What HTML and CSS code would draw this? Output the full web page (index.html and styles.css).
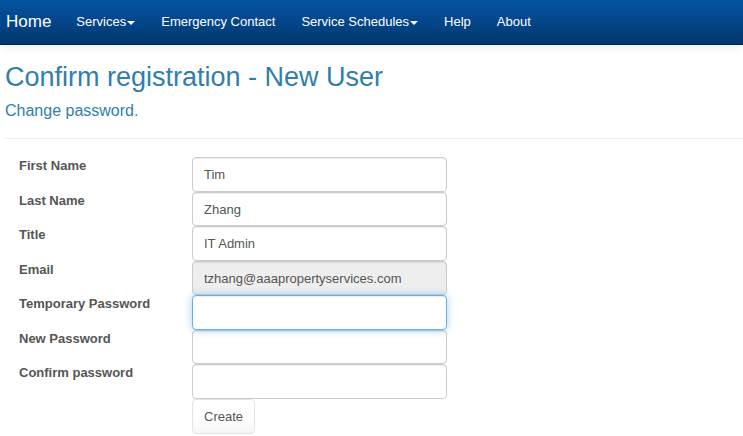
FILE: index.html
```html
<!DOCTYPE html>
<html lang="en">
<head>
<meta charset="utf-8">
<title>Confirm registration</title>
<link rel="stylesheet" href="styles.css">
</head>
<body>
<nav class="navbar">
  <a class="brand" href="#">Home</a>
  <a class="nav-link" href="#">Services<span class="caret"></span></a>
  <a class="nav-link" href="#">Emergency Contact</a>
  <a class="nav-link" href="#">Service Schedules<span class="caret"></span></a>
  <a class="nav-link" href="#">Help</a>
  <a class="nav-link" href="#">About</a>
</nav>
<main class="content">
  <h2 class="title">Confirm registration - New User</h2>
  <h4 class="subtitle">Change password.</h4>
  <hr class="rule">
  <form class="form">
    <div class="row"><label for="first">First Name</label><input class="field" id="first" type="text" value="Tim"></div>
    <div class="row"><label for="last">Last Name</label><input class="field" id="last" type="text" value="Zhang"></div>
    <div class="row"><label for="job">Title</label><input class="field" id="job" type="text" value="IT Admin"></div>
    <div class="row"><label for="email">Email</label><input class="field" id="email" type="text" value="tzhang@aaapropertyservices.com" readonly></div>
    <div class="row"><label for="temp">Temporary Password</label><input class="field active" id="temp" type="password"></div>
    <div class="row"><label for="new">New Password</label><input class="field" id="new" type="password"></div>
    <div class="row"><label for="confirm">Confirm password</label><input class="field" id="confirm" type="password"></div>
    <div class="row actions"><button class="button" type="submit">Create</button></div>
  </form>
</main>
</body>
</html>
```
FILE: styles.css
```css
* {
  box-sizing: border-box;
}

body {
  margin: 0;
  background: #fff;
  color: #555;
  font: 13px/18px "Liberation Sans", Arial, sans-serif;
}

.navbar {
  display: flex;
  align-items: center;
  height: 45px;
  padding: 0 6px;
  background: linear-gradient(#0454a0, #044488 55%, #033769);
  border-bottom: 1px solid #022241;
  box-shadow: 0 1px 9px rgba(0, 0, 0, 0.1);
}

.brand,
.nav-link {
  color: #fff;
  text-decoration: none;
  white-space: nowrap;
}

.brand {
  margin-right: 12px;
  font-size: 17px;
}

.nav-link {
  display: flex;
  align-items: center;
  padding: 0 13px;
}

.caret {
  margin: 2px 0 0 1px;
  border: 4px solid transparent;
  border-top-color: #fff;
  border-bottom: 0;
}

.content {
  padding: 16px 0 0 5px;
}

.title,
.subtitle {
  margin: 0;
  color: #317eac;
  font-weight: 400;
}

.title {
  font-size: 27px;
  line-height: 32px;
}

.subtitle {
  margin-top: 9px;
  font-size: 16px;
  line-height: 18px;
}

.rule {
  margin: 18px 0;
  border: 0;
  border-top: 1px solid #eee;
}

.form {
  padding-left: 14px;
}

.row {
  display: grid;
  grid-template-columns: 173px minmax(0, 255px);
  height: 35px;
}

.row:nth-child(even) {
  height: 34px;
}

.row label {
  font-weight: 700;
}

.field {
  width: 100%;
  height: 100%;
  margin: 0;
  padding: 0 11px;
  color: #555;
  background: #fff;
  border: 1px solid #ccc;
  border-radius: 4px;
  box-shadow: inset 0 1px 1px rgba(0, 0, 0, 0.075);
  font: inherit;
  outline: 0;
}

.field:read-only {
  background: #eee;
}

.field.active {
  position: relative;
  border-color: #66afe9;
  box-shadow: inset 0 1px 1px rgba(0, 0, 0, 0.075), 0 0 8px rgba(102, 175, 233, 0.6);
}

.row.actions {
  height: 35px;
}

.button {
  grid-column: 2;
  justify-self: start;
  padding: 0 11px;
  color: #555;
  background: linear-gradient(#fff 60%, #f5f5f5);
  border: 1px solid #e3e3e3;
  border-radius: 4px;
  font: inherit;
}
```
